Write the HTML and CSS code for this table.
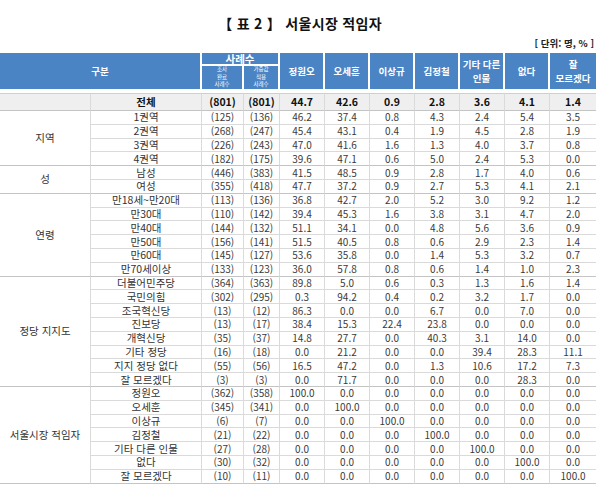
FILE: index.html
```html
<!DOCTYPE html>
<html lang="ko">
<head>
<meta charset="utf-8">
<title>서울시장 적임자</title>
<link rel="stylesheet" href="styles.css">
</head>
<body>
<div class="page">
  <div class="title">【 표 2 】 서울시장 적임자</div>
  <div class="unit">[ 단위: 명, % ]</div>
  <table class="tbl">
    <colgroup>
      <col class="c-grp"><col class="c-lab"><col class="c-n1"><col class="c-n2">
      <col class="c-v"><col class="c-v"><col class="c-v"><col class="c-v"><col class="c-v"><col class="c-v"><col class="c-vl">
    </colgroup>
    <thead>
      <tr class="h1">
        <th class="hd rs" colspan="2" rowspan="2">구분</th>
        <th class="hd cnt" colspan="2">사례수</th>
        <th class="hd rs" rowspan="2">정원오</th>
        <th class="hd rs" rowspan="2">오세훈</th>
        <th class="hd rs" rowspan="2">이상규</th>
        <th class="hd rs" rowspan="2">김정철</th>
        <th class="hd rs" rowspan="2"><span class="hl">기타 다른</span><span class="hl">인물</span></th>
        <th class="hd rs" rowspan="2">없다</th>
        <th class="hd rs last" rowspan="2"><span class="hl">잘</span><span class="hl">모르겠다</span></th>
      </tr>
      <tr class="h2">
        <th class="hd sub"><span class="sl">조사</span><span class="sl">완료</span><span class="sl">사례수</span></th>
        <th class="hd sub"><span class="sl">가중값</span><span class="sl">적용</span><span class="sl">사례수</span></th>
      </tr>
    </thead>
    <tbody>
      <tr class="tot">
        <td class="blank"></td><td class="lab">전체</td><td>(801)</td><td>(801)</td><td>44.7</td><td>42.6</td><td>0.9</td><td>2.8</td><td>3.6</td><td>4.1</td><td class="last">1.4</td>
      </tr>

      <tr class="d"><td class="grp" rowspan="4">지역</td><td class="lab">1권역</td><td>(125)</td><td>(136)</td><td>46.2</td><td>37.4</td><td>0.8</td><td>4.3</td><td>2.4</td><td>5.4</td><td class="last">3.5</td></tr>
      <tr class="d"><td class="lab">2권역</td><td>(268)</td><td>(247)</td><td>45.4</td><td>43.1</td><td>0.4</td><td>1.9</td><td>4.5</td><td>2.8</td><td class="last">1.9</td></tr>
      <tr class="d"><td class="lab">3권역</td><td>(226)</td><td>(243)</td><td>47.0</td><td>41.6</td><td>1.6</td><td>1.3</td><td>4.0</td><td>3.7</td><td class="last">0.8</td></tr>
      <tr class="d end"><td class="lab">4권역</td><td>(182)</td><td>(175)</td><td>39.6</td><td>47.1</td><td>0.6</td><td>5.0</td><td>2.4</td><td>5.3</td><td class="last">0.0</td></tr>

      <tr class="d"><td class="grp" rowspan="2">성</td><td class="lab">남성</td><td>(446)</td><td>(383)</td><td>41.5</td><td>48.5</td><td>0.9</td><td>2.8</td><td>1.7</td><td>4.0</td><td class="last">0.6</td></tr>
      <tr class="d end"><td class="lab">여성</td><td>(355)</td><td>(418)</td><td>47.7</td><td>37.2</td><td>0.9</td><td>2.7</td><td>5.3</td><td>4.1</td><td class="last">2.1</td></tr>

      <tr class="d"><td class="grp" rowspan="6">연령</td><td class="lab">만18세~만20대</td><td>(113)</td><td>(136)</td><td>36.8</td><td>42.7</td><td>2.0</td><td>5.2</td><td>3.0</td><td>9.2</td><td class="last">1.2</td></tr>
      <tr class="d"><td class="lab">만30대</td><td>(110)</td><td>(142)</td><td>39.4</td><td>45.3</td><td>1.6</td><td>3.8</td><td>3.1</td><td>4.7</td><td class="last">2.0</td></tr>
      <tr class="d"><td class="lab">만40대</td><td>(144)</td><td>(132)</td><td>51.1</td><td>34.1</td><td>0.0</td><td>4.8</td><td>5.6</td><td>3.6</td><td class="last">0.9</td></tr>
      <tr class="d"><td class="lab">만50대</td><td>(156)</td><td>(141)</td><td>51.5</td><td>40.5</td><td>0.8</td><td>0.6</td><td>2.9</td><td>2.3</td><td class="last">1.4</td></tr>
      <tr class="d"><td class="lab">만60대</td><td>(145)</td><td>(127)</td><td>53.6</td><td>35.8</td><td>0.0</td><td>1.4</td><td>5.3</td><td>3.2</td><td class="last">0.7</td></tr>
      <tr class="d end"><td class="lab">만70세이상</td><td>(133)</td><td>(123)</td><td>36.0</td><td>57.8</td><td>0.8</td><td>0.6</td><td>1.4</td><td>1.0</td><td class="last">2.3</td></tr>

      <tr class="d"><td class="grp" rowspan="8">정당 지지도</td><td class="lab">더불어민주당</td><td>(364)</td><td>(363)</td><td>89.8</td><td>5.0</td><td>0.6</td><td>0.3</td><td>1.3</td><td>1.6</td><td class="last">1.4</td></tr>
      <tr class="d"><td class="lab">국민의힘</td><td>(302)</td><td>(295)</td><td>0.3</td><td>94.2</td><td>0.4</td><td>0.2</td><td>3.2</td><td>1.7</td><td class="last">0.0</td></tr>
      <tr class="d"><td class="lab">조국혁신당</td><td>(13)</td><td>(12)</td><td>86.3</td><td>0.0</td><td>0.0</td><td>6.7</td><td>0.0</td><td>7.0</td><td class="last">0.0</td></tr>
      <tr class="d"><td class="lab">진보당</td><td>(13)</td><td>(17)</td><td>38.4</td><td>15.3</td><td>22.4</td><td>23.8</td><td>0.0</td><td>0.0</td><td class="last">0.0</td></tr>
      <tr class="d"><td class="lab">개혁신당</td><td>(35)</td><td>(37)</td><td>14.8</td><td>27.7</td><td>0.0</td><td>40.3</td><td>3.1</td><td>14.0</td><td class="last">0.0</td></tr>
      <tr class="d"><td class="lab">기타 정당</td><td>(16)</td><td>(18)</td><td>0.0</td><td>21.2</td><td>0.0</td><td>0.0</td><td>39.4</td><td>28.3</td><td class="last">11.1</td></tr>
      <tr class="d"><td class="lab">지지 정당 없다</td><td>(55)</td><td>(56)</td><td>16.5</td><td>47.2</td><td>0.0</td><td>1.3</td><td>10.6</td><td>17.2</td><td class="last">7.3</td></tr>
      <tr class="d end"><td class="lab">잘 모르겠다</td><td>(3)</td><td>(3)</td><td>0.0</td><td>71.7</td><td>0.0</td><td>0.0</td><td>0.0</td><td>28.3</td><td class="last">0.0</td></tr>

      <tr class="d"><td class="grp" rowspan="7">서울시장 적임자</td><td class="lab">정원오</td><td>(362)</td><td>(358)</td><td>100.0</td><td>0.0</td><td>0.0</td><td>0.0</td><td>0.0</td><td>0.0</td><td class="last">0.0</td></tr>
      <tr class="d"><td class="lab">오세훈</td><td>(345)</td><td>(341)</td><td>0.0</td><td>100.0</td><td>0.0</td><td>0.0</td><td>0.0</td><td>0.0</td><td class="last">0.0</td></tr>
      <tr class="d"><td class="lab">이상규</td><td>(6)</td><td>(7)</td><td>0.0</td><td>0.0</td><td>100.0</td><td>0.0</td><td>0.0</td><td>0.0</td><td class="last">0.0</td></tr>
      <tr class="d"><td class="lab">김정철</td><td>(21)</td><td>(22)</td><td>0.0</td><td>0.0</td><td>0.0</td><td>100.0</td><td>0.0</td><td>0.0</td><td class="last">0.0</td></tr>
      <tr class="d"><td class="lab">기타 다른 인물</td><td>(27)</td><td>(28)</td><td>0.0</td><td>0.0</td><td>0.0</td><td>0.0</td><td>100.0</td><td>0.0</td><td class="last">0.0</td></tr>
      <tr class="d"><td class="lab">없다</td><td>(30)</td><td>(32)</td><td>0.0</td><td>0.0</td><td>0.0</td><td>0.0</td><td>0.0</td><td>100.0</td><td class="last">0.0</td></tr>
      <tr class="d end"><td class="lab">잘 모르겠다</td><td>(10)</td><td>(11)</td><td>0.0</td><td>0.0</td><td>0.0</td><td>0.0</td><td>0.0</td><td>0.0</td><td class="last">100.0</td></tr>
    </tbody>
  </table>
</div>
</body>
</html>
```
FILE: styles.css
```css
* { box-sizing: border-box; }

body {
  margin: 0;
  background: #ffffff;
  font-family: "Noto Sans CJK KR", "Noto Sans", sans-serif;
  color: #333333;
}

.page {
  width: 600px;
}

.title {
  margin-top: 14px;
  height: 18px;
  line-height: 18px;
  text-align: center;
  font-size: 14px;
  font-weight: bold;
  color: #111111;
  letter-spacing: 0.3px;
}

.unit {
  margin-top: 5px;
  height: 12px;
  line-height: 12px;
  padding-right: 6px;
  text-align: right;
  font-size: 9.5px;
  font-weight: bold;
  color: #222222;
}

.tbl {
  margin-top: 4px;
  width: 596px;
  table-layout: fixed;
  border-collapse: separate;
  border-spacing: 0;
}

.c-grp { width: 91px; }
.c-lab { width: 111px; }
.c-n1 { width: 42px; }
.c-n2 { width: 36px; }
.c-v { width: 45px; }
.c-vl { width: 46px; }

.hd {
  padding: 0;
  background: #4b84c4;
  color: #ffffff;
  font-weight: bold;
  font-size: 9.5px;
  line-height: 14px;
  text-align: center;
  vertical-align: middle;
  border-right: 2px solid #ffffff;
  white-space: nowrap;
}

.hl {
  display: block;
  height: 14px;
  line-height: 14px;
}

.hd.last { border-right: 0; }

.hd.rs { border-bottom: 4px solid #ffffff; }

.hd.cnt {
  font-size: 10.5px;
  line-height: 11px;
  border-bottom: 2px solid #ffffff;
}

.hd.sub {
  font-weight: normal;
  border-bottom: 4px solid #ffffff;
}

.sl {
  display: block;
  height: 7.6px;
  font-size: 5.5px;
  line-height: 7.6px;
}

.h1 { height: 13px; }
.h2 { height: 27px; }

.tbl td {
  padding: 0;
  font-size: 10px;
  line-height: 12px;
  text-align: center;
  vertical-align: middle;
  white-space: nowrap;
  color: #3a3a3a;
  border-right: 1px solid #dadada;
  border-bottom: 1px solid #dadada;
}

.tbl td.last { border-right: 0; }

.tbl td.lab,
.tbl td.grp {
  font-size: 10.5px;
  color: #333333;
}

.tbl td.grp {
  border-bottom-color: #c4c4c4;
}

.tbl tr.end td {
  border-bottom-color: #c4c4c4;
}

.tot { height: 18px; }

.tbl tr.tot td {
  background: #efefef;
  font-weight: bold;
  color: #111111;
  font-size: 10.5px;
  border-top: 1px solid #cfcfcf;
  border-bottom: 1px solid #c4c4c4;
}

.d { height: 13.8px; }
```
